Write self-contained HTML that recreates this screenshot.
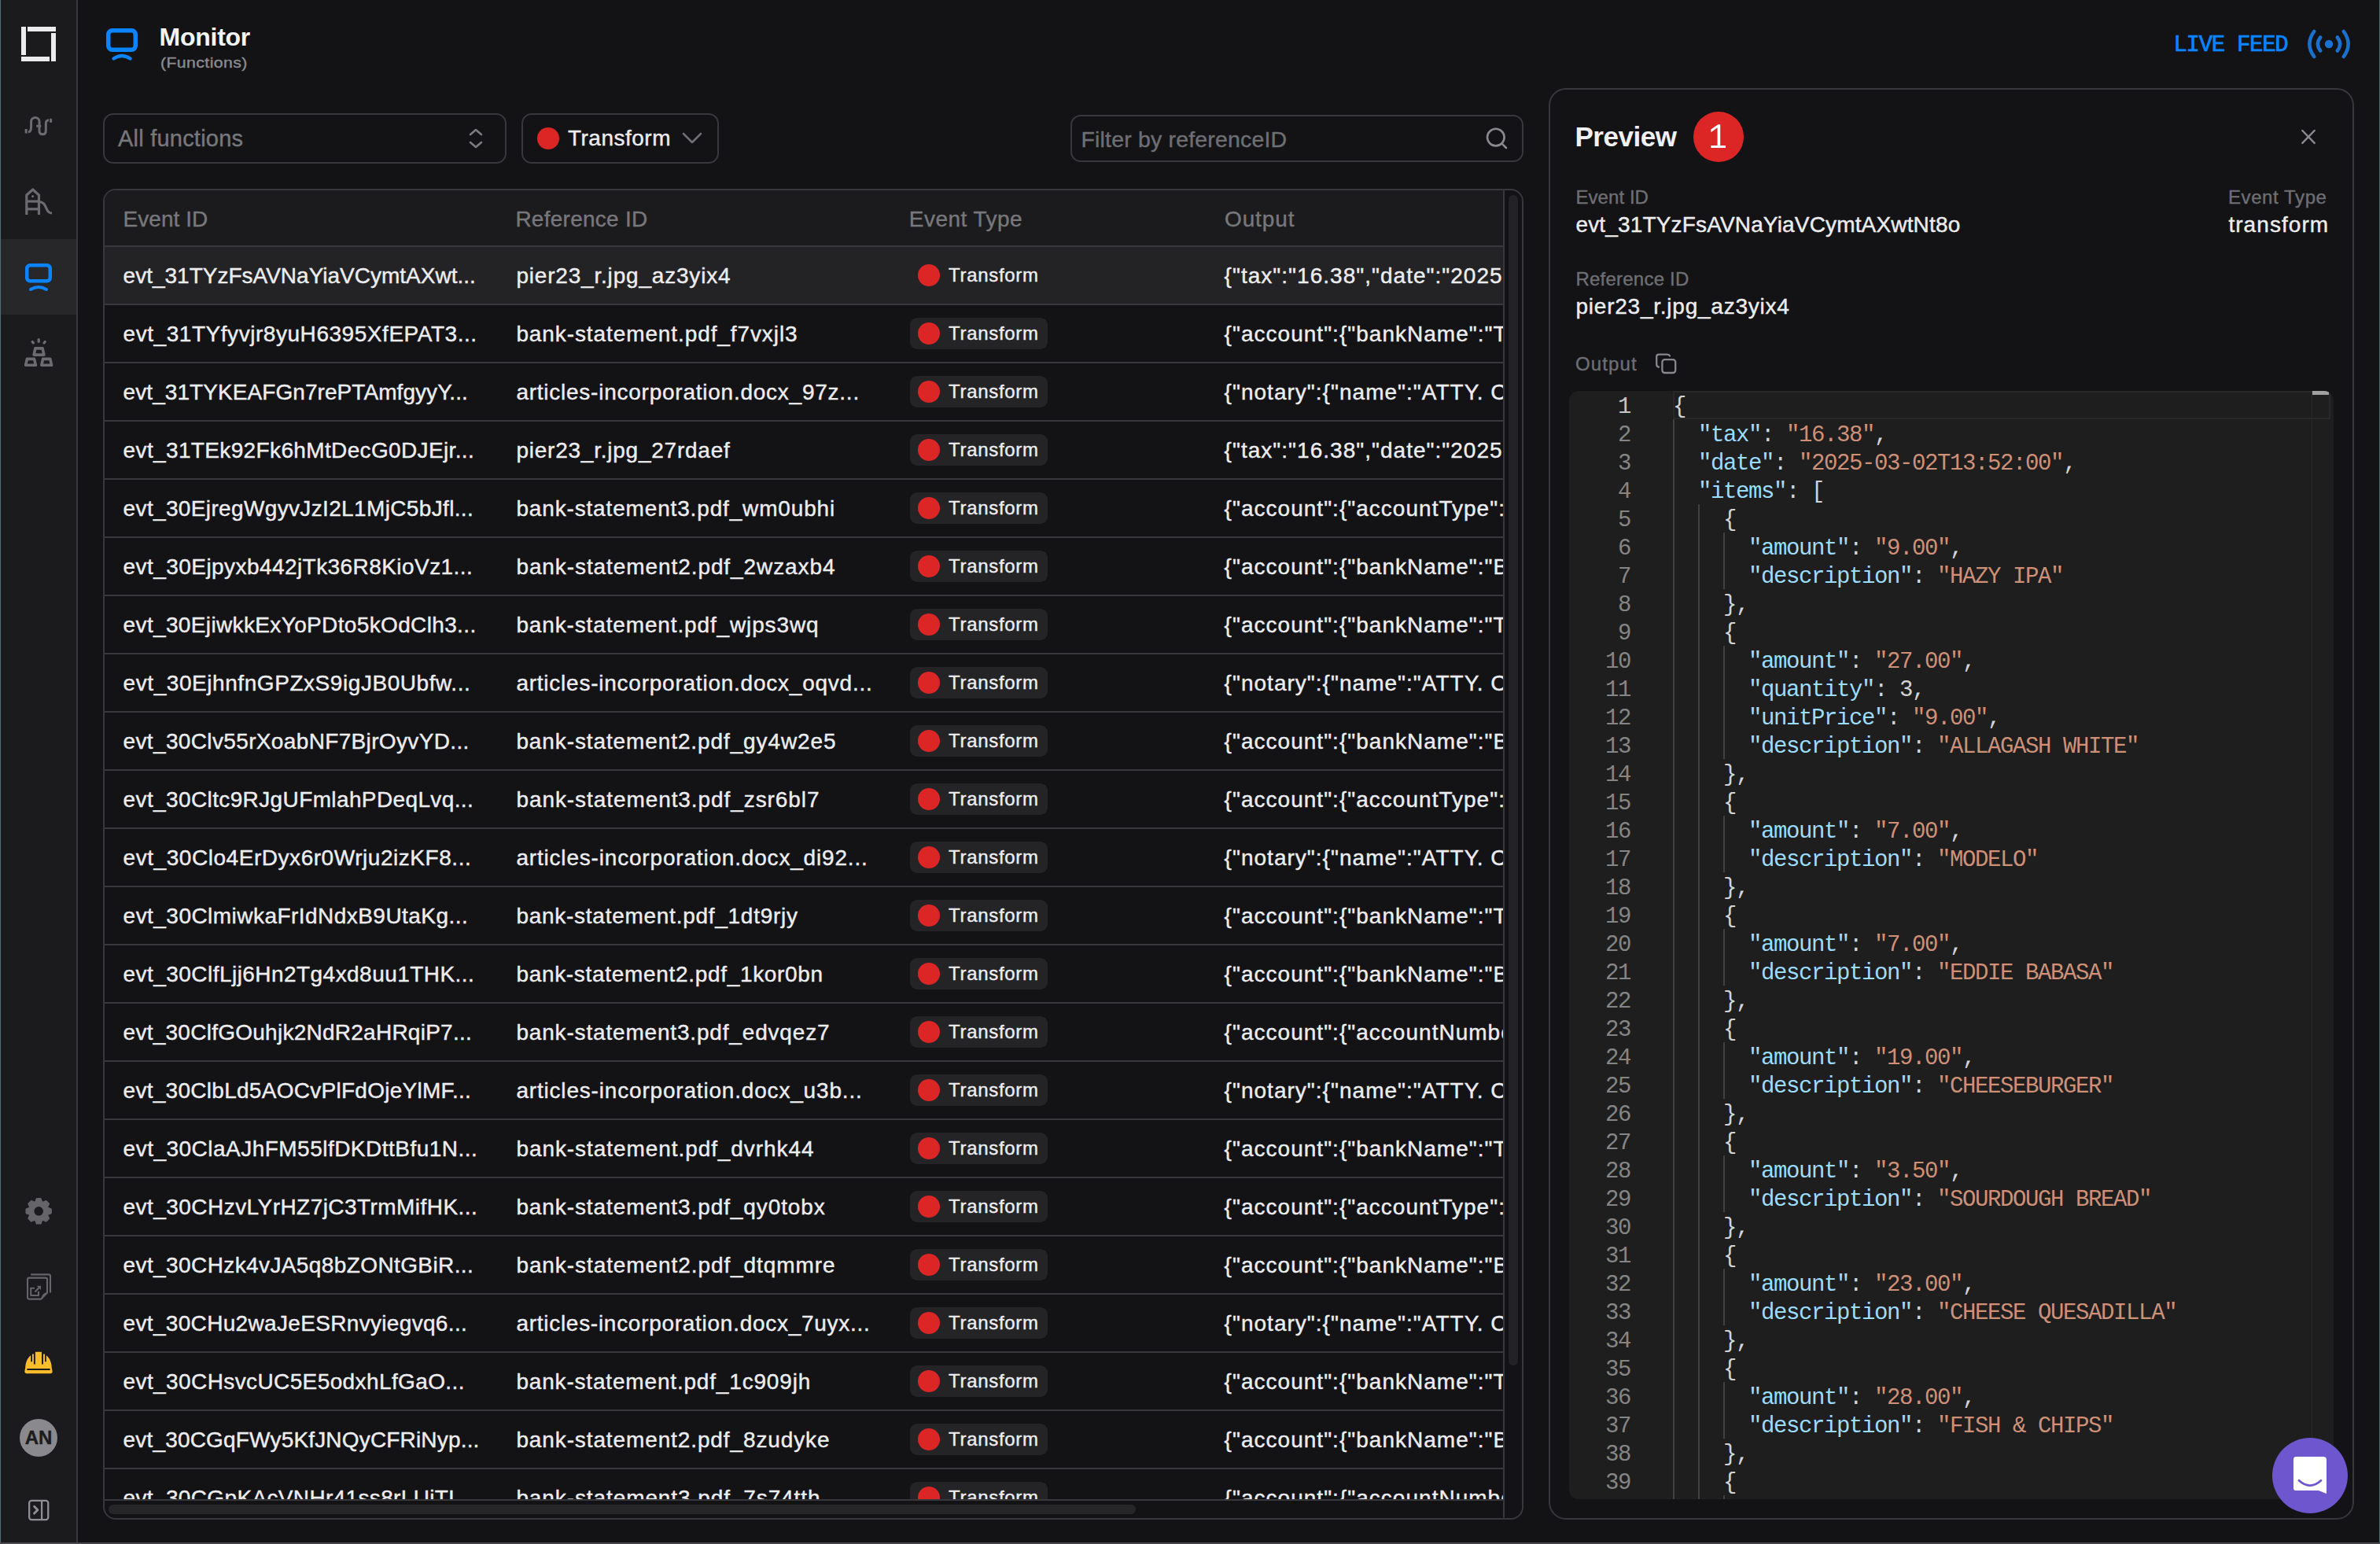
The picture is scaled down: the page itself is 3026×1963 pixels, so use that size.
<!DOCTYPE html>
<html><head><meta charset="utf-8"><title>Monitor</title>
<style>
html,body{margin:0;padding:0;width:3026px;height:1963px;overflow:hidden;background:#131316;font-family:"Liberation Sans",sans-serif;}
body{position:relative}
.t{-webkit-text-stroke:0.4px currentColor}
@media (max-width:1700px){html{zoom:0.5}}
</style></head><body>
<div style="position:absolute;left:0px;top:0px;width:1px;height:1963px;background:#4f6e78"></div><div style="position:absolute;left:3025px;top:0px;width:1px;height:1963px;background:#4f6e78"></div><div style="position:absolute;left:1px;top:0px;width:96px;height:1963px;background:#1b1b1e"></div><div style="position:absolute;left:97px;top:0px;width:2px;height:1963px;background:#38383c"></div><div style="position:absolute;left:1px;top:304px;width:96px;height:96px;background:#27272a"></div><div style="position:absolute;left:27px;top:34px;width:6px;height:36px;background:#ececef"></div><div style="position:absolute;left:35px;top:34px;width:36px;height:6px;background:#ececef"></div><div style="position:absolute;left:65px;top:42px;width:6px;height:36px;background:#ececef"></div><div style="position:absolute;left:27px;top:72px;width:36px;height:6px;background:#ececef"></div><svg style="position:absolute;left:28px;top:144px" width="42" height="32" viewBox="28 144 42 32" fill="none" stroke="#6b6b70" stroke-width="3">
<path d="M33.2 164 V169.5"/><path d="M36 167.8 C38.8 167.8 39.6 165.5 39.6 161 V154.5 C39.6 151.3 42 149.5 44.8 149.5 C47.6 149.5 50 151.5 50 154.5 V166.3 C50 169.3 51.8 170.8 54.2 170.8 C56.6 170.8 58.3 169.3 58.3 166.3 V157.5 C58.3 154.3 60 152.8 62 152.8"/><path d="M46.3 160.3 H52.3"/><path d="M64.6 150.8 V155.8"/></svg><svg style="position:absolute;left:28px;top:236px" width="42" height="40" viewBox="28 236 42 40" fill="none" stroke="#6b6b70" stroke-width="3.2" stroke-linejoin="round">
<path d="M33.8 273 V248 L41.7 241 L49.5 248 V273"/><path d="M33.8 256 H49.5"/><path d="M33.8 265.8 H49.5"/><path d="M49.5 256.5 C55 256.5 57 260 59 265 C60.5 269 62.5 271 66 271"/><circle cx="41.6" cy="249.6" r="1.6" fill="#6b6b70" stroke="none"/></svg><svg style="position:absolute;left:30px;top:333px" width="38" height="40" viewBox="0 0 38 40" fill="none" stroke="#0a84ff" stroke-width="4.5">
<rect x="4.25" y="4.25" width="29.5" height="20" rx="4"/><path d="M9 35 Q19 29 29 35" stroke-linecap="round" stroke-width="4"/></svg><svg style="position:absolute;left:26px;top:426px" width="46" height="44" viewBox="26 426 46 44" fill="none" stroke="#6b6b70" stroke-width="3.6" stroke-linejoin="round" stroke-linecap="round">
<path d="M43.1 451.1 L44.9 442.9 H54.1 L55.9 451.1 Z"/><path d="M32.6 464.3 L34.4 456.4 H43.6 L45.4 464.3 Z"/><path d="M52.8 464.3 L54.6 456.4 H63.8 L65.6 464.3 Z"/><path d="M49.2 431.6 V434.3" stroke-width="3.3"/><path d="M41.2 434.6 L42.4 436" stroke-width="3.3"/><path d="M57.2 434.6 L56 436" stroke-width="3.3"/></svg><svg style="position:absolute;left:28px;top:1518px" width="44" height="44" viewBox="28 1518 44 44"><path d="M46.65 1524.00 L51.75 1524.00 L53.34 1528.11 L54.54 1528.61 L58.57 1526.83 L62.17 1530.43 L60.39 1534.46 L60.89 1535.66 L65.00 1537.25 L65.00 1542.35 L60.89 1543.94 L60.39 1545.14 L62.17 1549.17 L58.57 1552.77 L54.54 1550.99 L53.34 1551.49 L51.75 1555.60 L46.65 1555.60 L45.06 1551.49 L43.86 1550.99 L39.83 1552.77 L36.23 1549.17 L38.01 1545.14 L37.51 1543.94 L33.40 1542.35 L33.40 1537.25 L37.51 1535.66 L38.01 1534.46 L36.23 1530.43 L39.83 1526.83 L43.86 1528.61 L45.06 1528.11 Z" fill="#646469" stroke="#646469" stroke-width="1.8" stroke-linejoin="round"/><circle cx="49.2" cy="1539.8" r="5.8" fill="#1b1b1e"/></svg><svg style="position:absolute;left:28px;top:1614px" width="42" height="44" viewBox="28 1614 42 44" fill="none" stroke="#646469" stroke-width="2.1" stroke-linejoin="round">
<path d="M39.2 1620.4 H62 Q64 1620.4 64 1622.4 V1643.6"/><path d="M37 1624.6 H58 Q60 1624.6 60 1626.6 V1643.5 L52.2 1651.6 H37 Q35 1651.6 35 1649.6 V1626.6 Q35 1624.6 37 1624.6 Z"/><path d="M53.6 1651.2 Q54 1645 60 1644.2"/><path d="M44.1 1637.7 H39.2 V1647 H49 V1641.7"/><path d="M44.4 1642.4 L50 1636.8"/><path d="M46.7 1634.8 H52 V1640.1 Z" fill="#646469" stroke="none"/></svg><svg style="position:absolute;left:28px;top:1714px" width="42" height="36" viewBox="28 1714 42 36">
<path d="M31.4 1744 C31.4 1742 32 1741 32.2 1739 C32.6 1731 35.5 1726 39.2 1723.3 V1731.2 H41 V1721.4 H42.9 V1734.6 H44.9 V1718.8 H53 V1734.6 H55 V1721.4 H57 V1731.2 H58.8 V1723.3 C62.5 1726 65.4 1731 65.8 1739 C66 1741 66.6 1742 66.6 1744 C66.6 1746 65 1746.2 63 1746.2 H35 C33 1746.2 31.4 1746 31.4 1744 Z" fill="#f9bd2b"/><path d="M35 1741 H63" stroke="#1b1b1e" stroke-width="1.8" stroke-linecap="round"/></svg><div style="position:absolute;left:25px;top:1804px;width:48px;height:48px;background:#8a8a8e;border-radius:50%"></div><div class="t" style="position:absolute;left:25px;top:1813.0px;height:30px;line-height:30px;font-size:24px;font-weight:700;color:#1c1c1e;letter-spacing:0px;font-family:'Liberation Sans',sans-serif;white-space:nowrap;width:48px;text-align:center;">AN</div><svg style="position:absolute;left:32px;top:1902px" width="34" height="36" viewBox="32 1902 34 36" fill="none" stroke="#8e8e93" stroke-width="2.3" stroke-linejoin="round">
<rect x="37.15" y="1907.85" width="24.1" height="24.2" rx="3"/><path d="M53.1 1907.85 V1932.05"/><path d="M43.6 1915.3 L47.9 1919.7 L43.6 1924.1" stroke-width="2.9" stroke-linecap="round"/></svg><svg style="position:absolute;left:132px;top:33px" width="46" height="47" viewBox="0 0 46 47" fill="none" stroke="#0a84ff">
<rect x="5.75" y="5.75" width="34.5" height="24.5" rx="5" stroke-width="5.5"/><path d="M12.5 41.5 Q23 34.5 33.5 41.5" stroke-width="4.4" stroke-linecap="round"/></svg><div class="t" style="position:absolute;left:202.6px;top:26.5px;height:40px;line-height:40px;font-size:32px;font-weight:700;color:#f5f5f7;letter-spacing:-0.274px;font-family:'Liberation Sans',sans-serif;white-space:nowrap;-webkit-text-stroke:0;">Monitor</div><div class="t" style="position:absolute;left:203.6px;top:69.0px;height:22px;line-height:22px;font-size:18px;font-weight:400;color:#8a8a8e;letter-spacing:0.35px;font-family:'Liberation Sans',sans-serif;white-space:nowrap;transform:scaleX(1.18);transform-origin:0 50%;">(Functions)</div><div class="t" style="position:absolute;left:2763.5px;top:40.1px;height:36px;line-height:36px;font-size:29px;font-weight:400;color:#0a84ff;letter-spacing:-1.3px;font-family:'Liberation Mono',monospace;white-space:nowrap;-webkit-text-stroke:0.7px #0a84ff;">LIVE FEED</div><svg style="position:absolute;left:2932px;top:35px" width="58" height="42" viewBox="0 0 58 42" fill="none" stroke="#1a72d0" stroke-width="4.5" stroke-linecap="round">
<path d="M10.2 5 Q-1.5 21 10.2 37"/><path d="M47.8 5 Q59.5 21 47.8 37"/><path d="M18.2 12.5 Q11.5 21 18.2 29.5"/><path d="M39.8 12.5 Q46.5 21 39.8 29.5"/><circle cx="29" cy="21" r="5.2" fill="#1a72d0" stroke="none"/></svg><div style="position:absolute;left:131px;top:144px;width:513px;height:64px;box-sizing:border-box;border:2px solid #38383c;border-radius:13px"></div><div class="t" style="position:absolute;left:150px;top:158.0px;height:36px;line-height:36px;font-size:29px;font-weight:400;color:#77777c;letter-spacing:0.22px;font-family:'Liberation Sans',sans-serif;white-space:nowrap;">All functions</div><svg style="position:absolute;left:594px;top:162px" width="22" height="28" viewBox="0 0 22 28" fill="none" stroke="#7a7a7f" stroke-width="2.6" stroke-linecap="round" stroke-linejoin="round">
<path d="M4 9 L11 3 L18 9"/><path d="M4 19 L11 25 L18 19"/></svg><div style="position:absolute;left:663px;top:144px;width:251px;height:64px;box-sizing:border-box;border:2px solid #38383c;border-radius:13px"></div><div style="position:absolute;left:683px;top:162px;width:28px;height:28px;background:#dc2626;border-radius:50%"></div><div class="t" style="position:absolute;left:721.9px;top:158.0px;height:35px;line-height:35px;font-size:28px;font-weight:400;color:#ededf0;letter-spacing:0.511px;font-family:'Liberation Sans',sans-serif;white-space:nowrap;">Transform</div><svg style="position:absolute;left:866px;top:167px" width="28" height="18" viewBox="0 0 28 18" fill="none" stroke="#6e6e73" stroke-width="2.6" stroke-linecap="round" stroke-linejoin="round"><path d="M3 3 L14 14 L25 3"/></svg><div style="position:absolute;left:1361px;top:146px;width:576px;height:60px;box-sizing:border-box;border:2px solid #38383c;border-radius:13px"></div><div class="t" style="position:absolute;left:1374.5px;top:158.6px;height:36px;line-height:36px;font-size:28.5px;font-weight:400;color:#6e6e73;letter-spacing:0.176px;font-family:'Liberation Sans',sans-serif;white-space:nowrap;">Filter by referenceID</div><svg style="position:absolute;left:1887px;top:160px" width="32" height="32" viewBox="0 0 32 32" fill="none" stroke="#8a8a8e" stroke-width="2.6" stroke-linecap="round"><circle cx="14.8" cy="14.6" r="10.8"/><path d="M22.6 22.6 L28 28"/></svg><div style="position:absolute;left:131px;top:240px;width:1806px;height:1692px;box-sizing:border-box;border:2px solid #38383c;border-radius:16px;overflow:hidden;"><div style="position:absolute;left:0;top:0;width:1778px;height:1664px;overflow:hidden"><div style="position:absolute;left:0px;top:0px;width:1778px;height:70px;background:#1b1b1e"></div><div style="position:absolute;left:0px;top:70px;width:1778px;height:2px;background:#38383c"></div><div class="t" style="position:absolute;left:23.599999999999994px;top:18.5px;height:35px;line-height:35px;font-size:28px;font-weight:400;color:#77777c;letter-spacing:0.035px;white-space:nowrap;">Event ID</div><div class="t" style="position:absolute;left:522.4px;top:18.5px;height:35px;line-height:35px;font-size:28px;font-weight:400;color:#77777c;letter-spacing:0.26px;white-space:nowrap;">Reference ID</div><div class="t" style="position:absolute;left:1022.8px;top:18.5px;height:35px;line-height:35px;font-size:28px;font-weight:400;color:#77777c;letter-spacing:0.466px;white-space:nowrap;">Event Type</div><div class="t" style="position:absolute;left:1424px;top:18.5px;height:35px;line-height:35px;font-size:28px;font-weight:400;color:#77777c;letter-spacing:0.885px;white-space:nowrap;">Output</div><div style="position:absolute;left:0px;top:72px;width:1778px;height:72px;background:#232326"></div><div style="position:absolute;left:0px;top:144px;width:1778px;height:2px;background:#38383c"></div><div class="t" style="position:absolute;left:23.599999999999994px;top:90.5px;height:35px;line-height:35px;font-size:28px;font-weight:400;color:#ededf0;letter-spacing:0.001px;white-space:nowrap;">evt_31TYzFsAVNaYiaVCymtAXwt...</div><div class="t" style="position:absolute;left:523.4px;top:90.5px;height:35px;line-height:35px;font-size:28px;font-weight:400;color:#ededf0;letter-spacing:0.807px;white-space:nowrap;">pier23_r.jpg_az3yix4</div><div style="position:absolute;left:1034px;top:94px;width:28px;height:28px;background:#dc2626;border-radius:50%"></div><div class="t" style="position:absolute;left:1073px;top:93.0px;height:30px;line-height:30px;font-size:24px;font-weight:400;color:#ededf0;letter-spacing:0.692px;white-space:nowrap;">Transform</div><div class="t" style="position:absolute;left:1423.6px;top:90.5px;height:35px;line-height:35px;font-size:28px;font-weight:400;color:#ededf0;letter-spacing:1.02px;white-space:nowrap;">{&quot;tax&quot;:&quot;16.38&quot;,&quot;date&quot;:&quot;2025-03-02T13:52:00&quot;}</div><div style="position:absolute;left:0px;top:218px;width:1778px;height:2px;background:#38383c"></div><div class="t" style="position:absolute;left:23.599999999999994px;top:164.5px;height:35px;line-height:35px;font-size:28px;font-weight:400;color:#ededf0;letter-spacing:0.544px;white-space:nowrap;">evt_31TYfyvjr8yuH6395XfEPAT3...</div><div class="t" style="position:absolute;left:523.4px;top:164.5px;height:35px;line-height:35px;font-size:28px;font-weight:400;color:#ededf0;letter-spacing:0.902px;white-space:nowrap;">bank-statement.pdf_f7vxjl3</div><div style="position:absolute;left:1024px;top:162px;width:175px;height:40px;background:#242427;border-radius:9px"></div><div style="position:absolute;left:1034px;top:168px;width:28px;height:28px;background:#dc2626;border-radius:50%"></div><div class="t" style="position:absolute;left:1073px;top:167.0px;height:30px;line-height:30px;font-size:24px;font-weight:400;color:#ededf0;letter-spacing:0.692px;white-space:nowrap;">Transform</div><div class="t" style="position:absolute;left:1423.6px;top:164.5px;height:35px;line-height:35px;font-size:28px;font-weight:400;color:#ededf0;letter-spacing:1.02px;white-space:nowrap;">{&quot;account&quot;:{&quot;bankName&quot;:&quot;TD Bank&quot;}}</div><div style="position:absolute;left:0px;top:292px;width:1778px;height:2px;background:#38383c"></div><div class="t" style="position:absolute;left:23.599999999999994px;top:238.5px;height:35px;line-height:35px;font-size:28px;font-weight:400;color:#ededf0;letter-spacing:0.069px;white-space:nowrap;">evt_31TYKEAFGn7rePTAmfgyyY...</div><div class="t" style="position:absolute;left:523.4px;top:238.5px;height:35px;line-height:35px;font-size:28px;font-weight:400;color:#ededf0;letter-spacing:0.755px;white-space:nowrap;">articles-incorporation.docx_97z...</div><div style="position:absolute;left:1024px;top:236px;width:175px;height:40px;background:#242427;border-radius:9px"></div><div style="position:absolute;left:1034px;top:242px;width:28px;height:28px;background:#dc2626;border-radius:50%"></div><div class="t" style="position:absolute;left:1073px;top:241.0px;height:30px;line-height:30px;font-size:24px;font-weight:400;color:#ededf0;letter-spacing:0.692px;white-space:nowrap;">Transform</div><div class="t" style="position:absolute;left:1423.6px;top:238.5px;height:35px;line-height:35px;font-size:28px;font-weight:400;color:#ededf0;letter-spacing:1.02px;white-space:nowrap;">{&quot;notary&quot;:{&quot;name&quot;:&quot;ATTY. CARLOS&quot;}}</div><div style="position:absolute;left:0px;top:366px;width:1778px;height:2px;background:#38383c"></div><div class="t" style="position:absolute;left:23.599999999999994px;top:312.5px;height:35px;line-height:35px;font-size:28px;font-weight:400;color:#ededf0;letter-spacing:0.361px;white-space:nowrap;">evt_31TEk92Fk6hMtDecG0DJEjr...</div><div class="t" style="position:absolute;left:523.4px;top:312.5px;height:35px;line-height:35px;font-size:28px;font-weight:400;color:#ededf0;letter-spacing:0.764px;white-space:nowrap;">pier23_r.jpg_27rdaef</div><div style="position:absolute;left:1024px;top:310px;width:175px;height:40px;background:#242427;border-radius:9px"></div><div style="position:absolute;left:1034px;top:316px;width:28px;height:28px;background:#dc2626;border-radius:50%"></div><div class="t" style="position:absolute;left:1073px;top:315.0px;height:30px;line-height:30px;font-size:24px;font-weight:400;color:#ededf0;letter-spacing:0.692px;white-space:nowrap;">Transform</div><div class="t" style="position:absolute;left:1423.6px;top:312.5px;height:35px;line-height:35px;font-size:28px;font-weight:400;color:#ededf0;letter-spacing:1.02px;white-space:nowrap;">{&quot;tax&quot;:&quot;16.38&quot;,&quot;date&quot;:&quot;2025-03-02T13:52:00&quot;}</div><div style="position:absolute;left:0px;top:440px;width:1778px;height:2px;background:#38383c"></div><div class="t" style="position:absolute;left:23.599999999999994px;top:386.5px;height:35px;line-height:35px;font-size:28px;font-weight:400;color:#ededf0;letter-spacing:0.355px;white-space:nowrap;">evt_30EjregWgyvJzI2L1MjC5bJfl...</div><div class="t" style="position:absolute;left:523.4px;top:386.5px;height:35px;line-height:35px;font-size:28px;font-weight:400;color:#ededf0;letter-spacing:0.843px;white-space:nowrap;">bank-statement3.pdf_wm0ubhi</div><div style="position:absolute;left:1024px;top:384px;width:175px;height:40px;background:#242427;border-radius:9px"></div><div style="position:absolute;left:1034px;top:390px;width:28px;height:28px;background:#dc2626;border-radius:50%"></div><div class="t" style="position:absolute;left:1073px;top:389.0px;height:30px;line-height:30px;font-size:24px;font-weight:400;color:#ededf0;letter-spacing:0.692px;white-space:nowrap;">Transform</div><div class="t" style="position:absolute;left:1423.6px;top:386.5px;height:35px;line-height:35px;font-size:28px;font-weight:400;color:#ededf0;letter-spacing:1.02px;white-space:nowrap;">{&quot;account&quot;:{&quot;accountType&quot;:&quot;checking&quot;}}</div><div style="position:absolute;left:0px;top:514px;width:1778px;height:2px;background:#38383c"></div><div class="t" style="position:absolute;left:23.599999999999994px;top:460.5px;height:35px;line-height:35px;font-size:28px;font-weight:400;color:#ededf0;letter-spacing:0.435px;white-space:nowrap;">evt_30Ejpyxb442jTk36R8KioVz1...</div><div class="t" style="position:absolute;left:523.4px;top:460.5px;height:35px;line-height:35px;font-size:28px;font-weight:400;color:#ededf0;letter-spacing:0.916px;white-space:nowrap;">bank-statement2.pdf_2wzaxb4</div><div style="position:absolute;left:1024px;top:458px;width:175px;height:40px;background:#242427;border-radius:9px"></div><div style="position:absolute;left:1034px;top:464px;width:28px;height:28px;background:#dc2626;border-radius:50%"></div><div class="t" style="position:absolute;left:1073px;top:463.0px;height:30px;line-height:30px;font-size:24px;font-weight:400;color:#ededf0;letter-spacing:0.692px;white-space:nowrap;">Transform</div><div class="t" style="position:absolute;left:1423.6px;top:460.5px;height:35px;line-height:35px;font-size:28px;font-weight:400;color:#ededf0;letter-spacing:1.02px;white-space:nowrap;">{&quot;account&quot;:{&quot;bankName&quot;:&quot;Bank of&quot;}}</div><div style="position:absolute;left:0px;top:588px;width:1778px;height:2px;background:#38383c"></div><div class="t" style="position:absolute;left:23.599999999999994px;top:534.5px;height:35px;line-height:35px;font-size:28px;font-weight:400;color:#ededf0;letter-spacing:0.357px;white-space:nowrap;">evt_30EjiwkkExYoPDto5kOdClh3...</div><div class="t" style="position:absolute;left:523.4px;top:534.5px;height:35px;line-height:35px;font-size:28px;font-weight:400;color:#ededf0;letter-spacing:0.861px;white-space:nowrap;">bank-statement.pdf_wjps3wq</div><div style="position:absolute;left:1024px;top:532px;width:175px;height:40px;background:#242427;border-radius:9px"></div><div style="position:absolute;left:1034px;top:538px;width:28px;height:28px;background:#dc2626;border-radius:50%"></div><div class="t" style="position:absolute;left:1073px;top:537.0px;height:30px;line-height:30px;font-size:24px;font-weight:400;color:#ededf0;letter-spacing:0.692px;white-space:nowrap;">Transform</div><div class="t" style="position:absolute;left:1423.6px;top:534.5px;height:35px;line-height:35px;font-size:28px;font-weight:400;color:#ededf0;letter-spacing:1.02px;white-space:nowrap;">{&quot;account&quot;:{&quot;bankName&quot;:&quot;TD Bank&quot;}}</div><div style="position:absolute;left:0px;top:662px;width:1778px;height:2px;background:#38383c"></div><div class="t" style="position:absolute;left:23.599999999999994px;top:608.5px;height:35px;line-height:35px;font-size:28px;font-weight:400;color:#ededf0;letter-spacing:0.562px;white-space:nowrap;">evt_30EjhnfnGPZxS9igJB0Ubfw...</div><div class="t" style="position:absolute;left:523.4px;top:608.5px;height:35px;line-height:35px;font-size:28px;font-weight:400;color:#ededf0;letter-spacing:0.763px;white-space:nowrap;">articles-incorporation.docx_oqvd...</div><div style="position:absolute;left:1024px;top:606px;width:175px;height:40px;background:#242427;border-radius:9px"></div><div style="position:absolute;left:1034px;top:612px;width:28px;height:28px;background:#dc2626;border-radius:50%"></div><div class="t" style="position:absolute;left:1073px;top:611.0px;height:30px;line-height:30px;font-size:24px;font-weight:400;color:#ededf0;letter-spacing:0.692px;white-space:nowrap;">Transform</div><div class="t" style="position:absolute;left:1423.6px;top:608.5px;height:35px;line-height:35px;font-size:28px;font-weight:400;color:#ededf0;letter-spacing:1.02px;white-space:nowrap;">{&quot;notary&quot;:{&quot;name&quot;:&quot;ATTY. CARLOS&quot;}}</div><div style="position:absolute;left:0px;top:736px;width:1778px;height:2px;background:#38383c"></div><div class="t" style="position:absolute;left:23.599999999999994px;top:682.5px;height:35px;line-height:35px;font-size:28px;font-weight:400;color:#ededf0;letter-spacing:0.354px;white-space:nowrap;">evt_30Clv55rXoabNF7BjrOyvYD...</div><div class="t" style="position:absolute;left:523.4px;top:682.5px;height:35px;line-height:35px;font-size:28px;font-weight:400;color:#ededf0;letter-spacing:0.894px;white-space:nowrap;">bank-statement2.pdf_gy4w2e5</div><div style="position:absolute;left:1024px;top:680px;width:175px;height:40px;background:#242427;border-radius:9px"></div><div style="position:absolute;left:1034px;top:686px;width:28px;height:28px;background:#dc2626;border-radius:50%"></div><div class="t" style="position:absolute;left:1073px;top:685.0px;height:30px;line-height:30px;font-size:24px;font-weight:400;color:#ededf0;letter-spacing:0.692px;white-space:nowrap;">Transform</div><div class="t" style="position:absolute;left:1423.6px;top:682.5px;height:35px;line-height:35px;font-size:28px;font-weight:400;color:#ededf0;letter-spacing:1.02px;white-space:nowrap;">{&quot;account&quot;:{&quot;bankName&quot;:&quot;Bank of&quot;}}</div><div style="position:absolute;left:0px;top:810px;width:1778px;height:2px;background:#38383c"></div><div class="t" style="position:absolute;left:23.599999999999994px;top:756.5px;height:35px;line-height:35px;font-size:28px;font-weight:400;color:#ededf0;letter-spacing:0.379px;white-space:nowrap;">evt_30Cltc9RJgUFmlahPDeqLvq...</div><div class="t" style="position:absolute;left:523.4px;top:756.5px;height:35px;line-height:35px;font-size:28px;font-weight:400;color:#ededf0;letter-spacing:0.926px;white-space:nowrap;">bank-statement3.pdf_zsr6bl7</div><div style="position:absolute;left:1024px;top:754px;width:175px;height:40px;background:#242427;border-radius:9px"></div><div style="position:absolute;left:1034px;top:760px;width:28px;height:28px;background:#dc2626;border-radius:50%"></div><div class="t" style="position:absolute;left:1073px;top:759.0px;height:30px;line-height:30px;font-size:24px;font-weight:400;color:#ededf0;letter-spacing:0.692px;white-space:nowrap;">Transform</div><div class="t" style="position:absolute;left:1423.6px;top:756.5px;height:35px;line-height:35px;font-size:28px;font-weight:400;color:#ededf0;letter-spacing:1.02px;white-space:nowrap;">{&quot;account&quot;:{&quot;accountType&quot;:&quot;checking&quot;}}</div><div style="position:absolute;left:0px;top:884px;width:1778px;height:2px;background:#38383c"></div><div class="t" style="position:absolute;left:23.599999999999994px;top:830.5px;height:35px;line-height:35px;font-size:28px;font-weight:400;color:#ededf0;letter-spacing:0.544px;white-space:nowrap;">evt_30Clo4ErDyx6r0Wrju2izKF8...</div><div class="t" style="position:absolute;left:523.4px;top:830.5px;height:35px;line-height:35px;font-size:28px;font-weight:400;color:#ededf0;letter-spacing:0.815px;white-space:nowrap;">articles-incorporation.docx_di92...</div><div style="position:absolute;left:1024px;top:828px;width:175px;height:40px;background:#242427;border-radius:9px"></div><div style="position:absolute;left:1034px;top:834px;width:28px;height:28px;background:#dc2626;border-radius:50%"></div><div class="t" style="position:absolute;left:1073px;top:833.0px;height:30px;line-height:30px;font-size:24px;font-weight:400;color:#ededf0;letter-spacing:0.692px;white-space:nowrap;">Transform</div><div class="t" style="position:absolute;left:1423.6px;top:830.5px;height:35px;line-height:35px;font-size:28px;font-weight:400;color:#ededf0;letter-spacing:1.02px;white-space:nowrap;">{&quot;notary&quot;:{&quot;name&quot;:&quot;ATTY. CARLOS&quot;}}</div><div style="position:absolute;left:0px;top:958px;width:1778px;height:2px;background:#38383c"></div><div class="t" style="position:absolute;left:23.599999999999994px;top:904.5px;height:35px;line-height:35px;font-size:28px;font-weight:400;color:#ededf0;letter-spacing:0.46px;white-space:nowrap;">evt_30ClmiwkaFrIdNdxB9UtaKg...</div><div class="t" style="position:absolute;left:523.4px;top:904.5px;height:35px;line-height:35px;font-size:28px;font-weight:400;color:#ededf0;letter-spacing:0.732px;white-space:nowrap;">bank-statement.pdf_1dt9rjy</div><div style="position:absolute;left:1024px;top:902px;width:175px;height:40px;background:#242427;border-radius:9px"></div><div style="position:absolute;left:1034px;top:908px;width:28px;height:28px;background:#dc2626;border-radius:50%"></div><div class="t" style="position:absolute;left:1073px;top:907.0px;height:30px;line-height:30px;font-size:24px;font-weight:400;color:#ededf0;letter-spacing:0.692px;white-space:nowrap;">Transform</div><div class="t" style="position:absolute;left:1423.6px;top:904.5px;height:35px;line-height:35px;font-size:28px;font-weight:400;color:#ededf0;letter-spacing:1.02px;white-space:nowrap;">{&quot;account&quot;:{&quot;bankName&quot;:&quot;TD Bank&quot;}}</div><div style="position:absolute;left:0px;top:1032px;width:1778px;height:2px;background:#38383c"></div><div class="t" style="position:absolute;left:23.599999999999994px;top:978.5px;height:35px;line-height:35px;font-size:28px;font-weight:400;color:#ededf0;letter-spacing:0.45px;white-space:nowrap;">evt_30ClfLjj6Hn2Tg4xd8uu1THK...</div><div class="t" style="position:absolute;left:523.4px;top:978.5px;height:35px;line-height:35px;font-size:28px;font-weight:400;color:#ededf0;letter-spacing:0.683px;white-space:nowrap;">bank-statement2.pdf_1kor0bn</div><div style="position:absolute;left:1024px;top:976px;width:175px;height:40px;background:#242427;border-radius:9px"></div><div style="position:absolute;left:1034px;top:982px;width:28px;height:28px;background:#dc2626;border-radius:50%"></div><div class="t" style="position:absolute;left:1073px;top:981.0px;height:30px;line-height:30px;font-size:24px;font-weight:400;color:#ededf0;letter-spacing:0.692px;white-space:nowrap;">Transform</div><div class="t" style="position:absolute;left:1423.6px;top:978.5px;height:35px;line-height:35px;font-size:28px;font-weight:400;color:#ededf0;letter-spacing:1.02px;white-space:nowrap;">{&quot;account&quot;:{&quot;bankName&quot;:&quot;Bank of&quot;}}</div><div style="position:absolute;left:0px;top:1106px;width:1778px;height:2px;background:#38383c"></div><div class="t" style="position:absolute;left:23.599999999999994px;top:1052.5px;height:35px;line-height:35px;font-size:28px;font-weight:400;color:#ededf0;letter-spacing:0.256px;white-space:nowrap;">evt_30ClfGOuhjk2NdR2aHRqiP7...</div><div class="t" style="position:absolute;left:523.4px;top:1052.5px;height:35px;line-height:35px;font-size:28px;font-weight:400;color:#ededf0;letter-spacing:0.826px;white-space:nowrap;">bank-statement3.pdf_edvqez7</div><div style="position:absolute;left:1024px;top:1050px;width:175px;height:40px;background:#242427;border-radius:9px"></div><div style="position:absolute;left:1034px;top:1056px;width:28px;height:28px;background:#dc2626;border-radius:50%"></div><div class="t" style="position:absolute;left:1073px;top:1055.0px;height:30px;line-height:30px;font-size:24px;font-weight:400;color:#ededf0;letter-spacing:0.692px;white-space:nowrap;">Transform</div><div class="t" style="position:absolute;left:1423.6px;top:1052.5px;height:35px;line-height:35px;font-size:28px;font-weight:400;color:#ededf0;letter-spacing:1.02px;white-space:nowrap;">{&quot;account&quot;:{&quot;accountNumber&quot;:&quot;1234&quot;}}</div><div style="position:absolute;left:0px;top:1180px;width:1778px;height:2px;background:#38383c"></div><div class="t" style="position:absolute;left:23.599999999999994px;top:1126.5px;height:35px;line-height:35px;font-size:28px;font-weight:400;color:#ededf0;letter-spacing:0.276px;white-space:nowrap;">evt_30ClbLd5AOCvPlFdOjeYlMF...</div><div class="t" style="position:absolute;left:523.4px;top:1126.5px;height:35px;line-height:35px;font-size:28px;font-weight:400;color:#ededf0;letter-spacing:0.816px;white-space:nowrap;">articles-incorporation.docx_u3b...</div><div style="position:absolute;left:1024px;top:1124px;width:175px;height:40px;background:#242427;border-radius:9px"></div><div style="position:absolute;left:1034px;top:1130px;width:28px;height:28px;background:#dc2626;border-radius:50%"></div><div class="t" style="position:absolute;left:1073px;top:1129.0px;height:30px;line-height:30px;font-size:24px;font-weight:400;color:#ededf0;letter-spacing:0.692px;white-space:nowrap;">Transform</div><div class="t" style="position:absolute;left:1423.6px;top:1126.5px;height:35px;line-height:35px;font-size:28px;font-weight:400;color:#ededf0;letter-spacing:1.02px;white-space:nowrap;">{&quot;notary&quot;:{&quot;name&quot;:&quot;ATTY. CARLOS&quot;}}</div><div style="position:absolute;left:0px;top:1254px;width:1778px;height:2px;background:#38383c"></div><div class="t" style="position:absolute;left:23.599999999999994px;top:1200.5px;height:35px;line-height:35px;font-size:28px;font-weight:400;color:#ededf0;letter-spacing:0.481px;white-space:nowrap;">evt_30ClaAJhFM55lfDKDttBfu1N...</div><div class="t" style="position:absolute;left:523.4px;top:1200.5px;height:35px;line-height:35px;font-size:28px;font-weight:400;color:#ededf0;letter-spacing:0.932px;white-space:nowrap;">bank-statement.pdf_dvrhk44</div><div style="position:absolute;left:1024px;top:1198px;width:175px;height:40px;background:#242427;border-radius:9px"></div><div style="position:absolute;left:1034px;top:1204px;width:28px;height:28px;background:#dc2626;border-radius:50%"></div><div class="t" style="position:absolute;left:1073px;top:1203.0px;height:30px;line-height:30px;font-size:24px;font-weight:400;color:#ededf0;letter-spacing:0.692px;white-space:nowrap;">Transform</div><div class="t" style="position:absolute;left:1423.6px;top:1200.5px;height:35px;line-height:35px;font-size:28px;font-weight:400;color:#ededf0;letter-spacing:1.02px;white-space:nowrap;">{&quot;account&quot;:{&quot;bankName&quot;:&quot;TD Bank&quot;}}</div><div style="position:absolute;left:0px;top:1328px;width:1778px;height:2px;background:#38383c"></div><div class="t" style="position:absolute;left:23.599999999999994px;top:1274.5px;height:35px;line-height:35px;font-size:28px;font-weight:400;color:#ededf0;letter-spacing:0.448px;white-space:nowrap;">evt_30CHzvLYrHZ7jC3TrmMifHK...</div><div class="t" style="position:absolute;left:523.4px;top:1274.5px;height:35px;line-height:35px;font-size:28px;font-weight:400;color:#ededf0;letter-spacing:0.904px;white-space:nowrap;">bank-statement3.pdf_qy0tobx</div><div style="position:absolute;left:1024px;top:1272px;width:175px;height:40px;background:#242427;border-radius:9px"></div><div style="position:absolute;left:1034px;top:1278px;width:28px;height:28px;background:#dc2626;border-radius:50%"></div><div class="t" style="position:absolute;left:1073px;top:1277.0px;height:30px;line-height:30px;font-size:24px;font-weight:400;color:#ededf0;letter-spacing:0.692px;white-space:nowrap;">Transform</div><div class="t" style="position:absolute;left:1423.6px;top:1274.5px;height:35px;line-height:35px;font-size:28px;font-weight:400;color:#ededf0;letter-spacing:1.02px;white-space:nowrap;">{&quot;account&quot;:{&quot;accountType&quot;:&quot;checking&quot;}}</div><div style="position:absolute;left:0px;top:1402px;width:1778px;height:2px;background:#38383c"></div><div class="t" style="position:absolute;left:23.599999999999994px;top:1348.5px;height:35px;line-height:35px;font-size:28px;font-weight:400;color:#ededf0;letter-spacing:0.393px;white-space:nowrap;">evt_30CHzk4vJA5q8bZONtGBiR...</div><div class="t" style="position:absolute;left:523.4px;top:1348.5px;height:35px;line-height:35px;font-size:28px;font-weight:400;color:#ededf0;letter-spacing:0.918px;white-space:nowrap;">bank-statement2.pdf_dtqmmre</div><div style="position:absolute;left:1024px;top:1346px;width:175px;height:40px;background:#242427;border-radius:9px"></div><div style="position:absolute;left:1034px;top:1352px;width:28px;height:28px;background:#dc2626;border-radius:50%"></div><div class="t" style="position:absolute;left:1073px;top:1351.0px;height:30px;line-height:30px;font-size:24px;font-weight:400;color:#ededf0;letter-spacing:0.692px;white-space:nowrap;">Transform</div><div class="t" style="position:absolute;left:1423.6px;top:1348.5px;height:35px;line-height:35px;font-size:28px;font-weight:400;color:#ededf0;letter-spacing:1.02px;white-space:nowrap;">{&quot;account&quot;:{&quot;bankName&quot;:&quot;Bank of&quot;}}</div><div style="position:absolute;left:0px;top:1476px;width:1778px;height:2px;background:#38383c"></div><div class="t" style="position:absolute;left:23.599999999999994px;top:1422.5px;height:35px;line-height:35px;font-size:28px;font-weight:400;color:#ededf0;letter-spacing:0.327px;white-space:nowrap;">evt_30CHu2waJeESRnvyiegvq6...</div><div class="t" style="position:absolute;left:523.4px;top:1422.5px;height:35px;line-height:35px;font-size:28px;font-weight:400;color:#ededf0;letter-spacing:0.721px;white-space:nowrap;">articles-incorporation.docx_7uyx...</div><div style="position:absolute;left:1024px;top:1420px;width:175px;height:40px;background:#242427;border-radius:9px"></div><div style="position:absolute;left:1034px;top:1426px;width:28px;height:28px;background:#dc2626;border-radius:50%"></div><div class="t" style="position:absolute;left:1073px;top:1425.0px;height:30px;line-height:30px;font-size:24px;font-weight:400;color:#ededf0;letter-spacing:0.692px;white-space:nowrap;">Transform</div><div class="t" style="position:absolute;left:1423.6px;top:1422.5px;height:35px;line-height:35px;font-size:28px;font-weight:400;color:#ededf0;letter-spacing:1.02px;white-space:nowrap;">{&quot;notary&quot;:{&quot;name&quot;:&quot;ATTY. CARLOS&quot;}}</div><div style="position:absolute;left:0px;top:1550px;width:1778px;height:2px;background:#38383c"></div><div class="t" style="position:absolute;left:23.599999999999994px;top:1496.5px;height:35px;line-height:35px;font-size:28px;font-weight:400;color:#ededf0;letter-spacing:0.392px;white-space:nowrap;">evt_30CHsvcUC5E5odxhLfGaO...</div><div class="t" style="position:absolute;left:523.4px;top:1496.5px;height:35px;line-height:35px;font-size:28px;font-weight:400;color:#ededf0;letter-spacing:0.821px;white-space:nowrap;">bank-statement.pdf_1c909jh</div><div style="position:absolute;left:1024px;top:1494px;width:175px;height:40px;background:#242427;border-radius:9px"></div><div style="position:absolute;left:1034px;top:1500px;width:28px;height:28px;background:#dc2626;border-radius:50%"></div><div class="t" style="position:absolute;left:1073px;top:1499.0px;height:30px;line-height:30px;font-size:24px;font-weight:400;color:#ededf0;letter-spacing:0.692px;white-space:nowrap;">Transform</div><div class="t" style="position:absolute;left:1423.6px;top:1496.5px;height:35px;line-height:35px;font-size:28px;font-weight:400;color:#ededf0;letter-spacing:1.02px;white-space:nowrap;">{&quot;account&quot;:{&quot;bankName&quot;:&quot;TD Bank&quot;}}</div><div style="position:absolute;left:0px;top:1624px;width:1778px;height:2px;background:#38383c"></div><div class="t" style="position:absolute;left:23.599999999999994px;top:1570.5px;height:35px;line-height:35px;font-size:28px;font-weight:400;color:#ededf0;letter-spacing:0.176px;white-space:nowrap;">evt_30CGqFWy5KfJNQyCFRiNyp...</div><div class="t" style="position:absolute;left:523.4px;top:1570.5px;height:35px;line-height:35px;font-size:28px;font-weight:400;color:#ededf0;letter-spacing:0.886px;white-space:nowrap;">bank-statement2.pdf_8zudyke</div><div style="position:absolute;left:1024px;top:1568px;width:175px;height:40px;background:#242427;border-radius:9px"></div><div style="position:absolute;left:1034px;top:1574px;width:28px;height:28px;background:#dc2626;border-radius:50%"></div><div class="t" style="position:absolute;left:1073px;top:1573.0px;height:30px;line-height:30px;font-size:24px;font-weight:400;color:#ededf0;letter-spacing:0.692px;white-space:nowrap;">Transform</div><div class="t" style="position:absolute;left:1423.6px;top:1570.5px;height:35px;line-height:35px;font-size:28px;font-weight:400;color:#ededf0;letter-spacing:1.02px;white-space:nowrap;">{&quot;account&quot;:{&quot;bankName&quot;:&quot;Bank of&quot;}}</div><div style="position:absolute;left:0px;top:1698px;width:1778px;height:2px;background:#38383c"></div><div class="t" style="position:absolute;left:23.599999999999994px;top:1644.5px;height:35px;line-height:35px;font-size:28px;font-weight:400;color:#ededf0;letter-spacing:0.35px;white-space:nowrap;">evt_30CGpKAcVNHr41ss8rLUiTL...</div><div class="t" style="position:absolute;left:523.4px;top:1644.5px;height:35px;line-height:35px;font-size:28px;font-weight:400;color:#ededf0;letter-spacing:0.903px;white-space:nowrap;">bank-statement3.pdf_7s74tth</div><div style="position:absolute;left:1024px;top:1642px;width:175px;height:40px;background:#242427;border-radius:9px"></div><div style="position:absolute;left:1034px;top:1648px;width:28px;height:28px;background:#dc2626;border-radius:50%"></div><div class="t" style="position:absolute;left:1073px;top:1647.0px;height:30px;line-height:30px;font-size:24px;font-weight:400;color:#ededf0;letter-spacing:0.692px;white-space:nowrap;">Transform</div><div class="t" style="position:absolute;left:1423.6px;top:1644.5px;height:35px;line-height:35px;font-size:28px;font-weight:400;color:#ededf0;letter-spacing:1.02px;white-space:nowrap;">{&quot;account&quot;:{&quot;accountNumber&quot;:&quot;1234&quot;}}</div></div><div style="position:absolute;left:1778px;top:0px;width:2px;height:1688px;background:#38383c"></div><div style="position:absolute;left:1785px;top:6px;width:12px;height:1488px;background:#232326;border-radius:6px"></div><div style="position:absolute;left:0px;top:1664px;width:1778px;height:2px;background:#38383c"></div><div style="position:absolute;left:5px;top:1671px;width:1306px;height:12px;background:#262629;border-radius:6px"></div></div><div style="position:absolute;left:1969px;top:112px;width:1024px;height:1820px;box-sizing:border-box;border:2px solid #38383c;border-radius:22px"></div><div class="t" style="position:absolute;left:2002.4px;top:152.0px;height:44px;line-height:44px;font-size:35px;font-weight:700;color:#f0f0f2;letter-spacing:-0.464px;font-family:'Liberation Sans',sans-serif;white-space:nowrap;-webkit-text-stroke:0;">Preview</div><div style="position:absolute;left:2153px;top:142px;width:63.5px;height:63.5px;background:#dc2626;border-radius:50%"></div><svg style="position:absolute;left:2170px;top:154px" width="30" height="38" viewBox="2170 154 30 38"><path d="M2175.3 164.6 L2184.4 158.3 H2187.2 V184.9 H2194 V188.1 H2175.3 V184.9 H2183.6 V162.3 L2175.3 168.3 Z" fill="#fff"/></svg><svg style="position:absolute;left:2921px;top:160px" width="28" height="28" viewBox="0 0 28 28" fill="none" stroke="#8a8a8e" stroke-width="2.5" stroke-linecap="round"><path d="M6.3 6 L21.7 21.8"/><path d="M21.7 6 L6.3 21.8"/></svg><div class="t" style="position:absolute;left:2003.5px;top:235.8px;height:30px;line-height:30px;font-size:24px;font-weight:400;color:#6e6e73;letter-spacing:0.056px;font-family:'Liberation Sans',sans-serif;white-space:nowrap;">Event ID</div><div class="t" style="position:absolute;left:2833px;top:235.8px;height:30px;line-height:30px;font-size:24px;font-weight:400;color:#6e6e73;letter-spacing:0.586px;font-family:'Liberation Sans',sans-serif;white-space:nowrap;">Event Type</div><div class="t" style="position:absolute;left:2003.4px;top:268.3px;height:35px;line-height:35px;font-size:28px;font-weight:400;color:#ededf0;letter-spacing:0.164px;font-family:'Liberation Sans',sans-serif;white-space:nowrap;">evt_31TYzFsAVNaYiaVCymtAXwtNt8o</div><div class="t" style="position:absolute;left:2833.4px;top:268.3px;height:35px;line-height:35px;font-size:28px;font-weight:400;color:#ededf0;letter-spacing:1.06px;font-family:'Liberation Sans',sans-serif;white-space:nowrap;">transform</div><div class="t" style="position:absolute;left:2003.5px;top:339.6px;height:30px;line-height:30px;font-size:24px;font-weight:400;color:#6e6e73;letter-spacing:0.221px;font-family:'Liberation Sans',sans-serif;white-space:nowrap;">Reference ID</div><div class="t" style="position:absolute;left:2003.5px;top:372.3px;height:35px;line-height:35px;font-size:28px;font-weight:400;color:#ededf0;letter-spacing:0.765px;font-family:'Liberation Sans',sans-serif;white-space:nowrap;">pier23_r.jpg_az3yix4</div><div class="t" style="position:absolute;left:2003px;top:447.5px;height:30px;line-height:30px;font-size:24px;font-weight:400;color:#6e6e73;letter-spacing:1.124px;font-family:'Liberation Sans',sans-serif;white-space:nowrap;">Output</div><svg style="position:absolute;left:2103px;top:447px" width="30" height="30" viewBox="0 0 30 30" fill="none" stroke="#88888c" stroke-width="2.3" stroke-linejoin="round" stroke-linecap="round"><path d="M6 19.6 Q3.2 19 3.2 16 V6.6 Q3.2 3.6 6.2 3.6 H16.4 Q19 3.6 20 5.4"/><rect x="10.4" y="10.2" width="16.8" height="16.8" rx="3.2"/></svg><div style="position:absolute;left:1995px;top:497px;width:972px;height:1409px;background:#1e1e1e;border-radius:12px;overflow:hidden;font-family:'Liberation Mono',monospace;"><div style="position:absolute;left:132px;top:0px;width:836px;height:36px;box-sizing:border-box;border:2px solid #282828;"></div><div style="position:absolute;left:944px;top:0;width:1px;height:1409px;background:#2a2a2a"></div><div style="position:absolute;left:945px;top:0;width:21px;height:5px;background:#a0a0a0"></div><div style="position:absolute;left:0;width:78px;text-align:right;top:3.3px;height:36px;line-height:36px;font-size:29px;letter-spacing:-1.4px;color:#c6c6c6;white-space:pre">1</div><div style="position:absolute;left:132px;top:3.3px;height:36px;line-height:36px;font-size:29px;letter-spacing:-1.4px;white-space:pre"><span style="color:#d4d4d4">{</span></div><div style="position:absolute;left:0;width:78px;text-align:right;top:39.3px;height:36px;line-height:36px;font-size:29px;letter-spacing:-1.4px;color:#858585;white-space:pre">2</div><div style="position:absolute;left:132px;top:36px;width:2px;height:36px;background:#404040"></div><div style="position:absolute;left:164px;top:39.3px;height:36px;line-height:36px;font-size:29px;letter-spacing:-1.4px;white-space:pre"><span style="color:#9cdcfe">&quot;tax&quot;</span><span style="color:#d4d4d4">:</span><span style="color:#d4d4d4"> </span><span style="color:#ce9178">&quot;16.38&quot;</span><span style="color:#d4d4d4">,</span></div><div style="position:absolute;left:0;width:78px;text-align:right;top:75.3px;height:36px;line-height:36px;font-size:29px;letter-spacing:-1.4px;color:#858585;white-space:pre">3</div><div style="position:absolute;left:132px;top:72px;width:2px;height:36px;background:#404040"></div><div style="position:absolute;left:164px;top:75.3px;height:36px;line-height:36px;font-size:29px;letter-spacing:-1.4px;white-space:pre"><span style="color:#9cdcfe">&quot;date&quot;</span><span style="color:#d4d4d4">:</span><span style="color:#d4d4d4"> </span><span style="color:#ce9178">&quot;2025-03-02T13:52:00&quot;</span><span style="color:#d4d4d4">,</span></div><div style="position:absolute;left:0;width:78px;text-align:right;top:111.3px;height:36px;line-height:36px;font-size:29px;letter-spacing:-1.4px;color:#858585;white-space:pre">4</div><div style="position:absolute;left:132px;top:108px;width:2px;height:36px;background:#404040"></div><div style="position:absolute;left:164px;top:111.3px;height:36px;line-height:36px;font-size:29px;letter-spacing:-1.4px;white-space:pre"><span style="color:#9cdcfe">&quot;items&quot;</span><span style="color:#d4d4d4">:</span><span style="color:#d4d4d4"> </span><span style="color:#d4d4d4">[</span></div><div style="position:absolute;left:0;width:78px;text-align:right;top:147.3px;height:36px;line-height:36px;font-size:29px;letter-spacing:-1.4px;color:#858585;white-space:pre">5</div><div style="position:absolute;left:132px;top:144px;width:2px;height:36px;background:#404040"></div><div style="position:absolute;left:164px;top:144px;width:2px;height:36px;background:#404040"></div><div style="position:absolute;left:196px;top:147.3px;height:36px;line-height:36px;font-size:29px;letter-spacing:-1.4px;white-space:pre"><span style="color:#d4d4d4">{</span></div><div style="position:absolute;left:0;width:78px;text-align:right;top:183.3px;height:36px;line-height:36px;font-size:29px;letter-spacing:-1.4px;color:#858585;white-space:pre">6</div><div style="position:absolute;left:132px;top:180px;width:2px;height:36px;background:#404040"></div><div style="position:absolute;left:164px;top:180px;width:2px;height:36px;background:#404040"></div><div style="position:absolute;left:196px;top:180px;width:2px;height:36px;background:#404040"></div><div style="position:absolute;left:228px;top:183.3px;height:36px;line-height:36px;font-size:29px;letter-spacing:-1.4px;white-space:pre"><span style="color:#9cdcfe">&quot;amount&quot;</span><span style="color:#d4d4d4">:</span><span style="color:#d4d4d4"> </span><span style="color:#ce9178">&quot;9.00&quot;</span><span style="color:#d4d4d4">,</span></div><div style="position:absolute;left:0;width:78px;text-align:right;top:219.3px;height:36px;line-height:36px;font-size:29px;letter-spacing:-1.4px;color:#858585;white-space:pre">7</div><div style="position:absolute;left:132px;top:216px;width:2px;height:36px;background:#404040"></div><div style="position:absolute;left:164px;top:216px;width:2px;height:36px;background:#404040"></div><div style="position:absolute;left:196px;top:216px;width:2px;height:36px;background:#404040"></div><div style="position:absolute;left:228px;top:219.3px;height:36px;line-height:36px;font-size:29px;letter-spacing:-1.4px;white-space:pre"><span style="color:#9cdcfe">&quot;description&quot;</span><span style="color:#d4d4d4">:</span><span style="color:#d4d4d4"> </span><span style="color:#ce9178">&quot;HAZY IPA&quot;</span></div><div style="position:absolute;left:0;width:78px;text-align:right;top:255.3px;height:36px;line-height:36px;font-size:29px;letter-spacing:-1.4px;color:#858585;white-space:pre">8</div><div style="position:absolute;left:132px;top:252px;width:2px;height:36px;background:#404040"></div><div style="position:absolute;left:164px;top:252px;width:2px;height:36px;background:#404040"></div><div style="position:absolute;left:196px;top:255.3px;height:36px;line-height:36px;font-size:29px;letter-spacing:-1.4px;white-space:pre"><span style="color:#d4d4d4">}</span><span style="color:#d4d4d4">,</span></div><div style="position:absolute;left:0;width:78px;text-align:right;top:291.3px;height:36px;line-height:36px;font-size:29px;letter-spacing:-1.4px;color:#858585;white-space:pre">9</div><div style="position:absolute;left:132px;top:288px;width:2px;height:36px;background:#404040"></div><div style="position:absolute;left:164px;top:288px;width:2px;height:36px;background:#404040"></div><div style="position:absolute;left:196px;top:291.3px;height:36px;line-height:36px;font-size:29px;letter-spacing:-1.4px;white-space:pre"><span style="color:#d4d4d4">{</span></div><div style="position:absolute;left:0;width:78px;text-align:right;top:327.3px;height:36px;line-height:36px;font-size:29px;letter-spacing:-1.4px;color:#858585;white-space:pre">10</div><div style="position:absolute;left:132px;top:324px;width:2px;height:36px;background:#404040"></div><div style="position:absolute;left:164px;top:324px;width:2px;height:36px;background:#404040"></div><div style="position:absolute;left:196px;top:324px;width:2px;height:36px;background:#404040"></div><div style="position:absolute;left:228px;top:327.3px;height:36px;line-height:36px;font-size:29px;letter-spacing:-1.4px;white-space:pre"><span style="color:#9cdcfe">&quot;amount&quot;</span><span style="color:#d4d4d4">:</span><span style="color:#d4d4d4"> </span><span style="color:#ce9178">&quot;27.00&quot;</span><span style="color:#d4d4d4">,</span></div><div style="position:absolute;left:0;width:78px;text-align:right;top:363.3px;height:36px;line-height:36px;font-size:29px;letter-spacing:-1.4px;color:#858585;white-space:pre">11</div><div style="position:absolute;left:132px;top:360px;width:2px;height:36px;background:#404040"></div><div style="position:absolute;left:164px;top:360px;width:2px;height:36px;background:#404040"></div><div style="position:absolute;left:196px;top:360px;width:2px;height:36px;background:#404040"></div><div style="position:absolute;left:228px;top:363.3px;height:36px;line-height:36px;font-size:29px;letter-spacing:-1.4px;white-space:pre"><span style="color:#9cdcfe">&quot;quantity&quot;</span><span style="color:#d4d4d4">:</span><span style="color:#d4d4d4"> </span><span style="color:#d4d4d4">3</span><span style="color:#d4d4d4">,</span></div><div style="position:absolute;left:0;width:78px;text-align:right;top:399.3px;height:36px;line-height:36px;font-size:29px;letter-spacing:-1.4px;color:#858585;white-space:pre">12</div><div style="position:absolute;left:132px;top:396px;width:2px;height:36px;background:#404040"></div><div style="position:absolute;left:164px;top:396px;width:2px;height:36px;background:#404040"></div><div style="position:absolute;left:196px;top:396px;width:2px;height:36px;background:#404040"></div><div style="position:absolute;left:228px;top:399.3px;height:36px;line-height:36px;font-size:29px;letter-spacing:-1.4px;white-space:pre"><span style="color:#9cdcfe">&quot;unitPrice&quot;</span><span style="color:#d4d4d4">:</span><span style="color:#d4d4d4"> </span><span style="color:#ce9178">&quot;9.00&quot;</span><span style="color:#d4d4d4">,</span></div><div style="position:absolute;left:0;width:78px;text-align:right;top:435.3px;height:36px;line-height:36px;font-size:29px;letter-spacing:-1.4px;color:#858585;white-space:pre">13</div><div style="position:absolute;left:132px;top:432px;width:2px;height:36px;background:#404040"></div><div style="position:absolute;left:164px;top:432px;width:2px;height:36px;background:#404040"></div><div style="position:absolute;left:196px;top:432px;width:2px;height:36px;background:#404040"></div><div style="position:absolute;left:228px;top:435.3px;height:36px;line-height:36px;font-size:29px;letter-spacing:-1.4px;white-space:pre"><span style="color:#9cdcfe">&quot;description&quot;</span><span style="color:#d4d4d4">:</span><span style="color:#d4d4d4"> </span><span style="color:#ce9178">&quot;ALLAGASH WHITE&quot;</span></div><div style="position:absolute;left:0;width:78px;text-align:right;top:471.3px;height:36px;line-height:36px;font-size:29px;letter-spacing:-1.4px;color:#858585;white-space:pre">14</div><div style="position:absolute;left:132px;top:468px;width:2px;height:36px;background:#404040"></div><div style="position:absolute;left:164px;top:468px;width:2px;height:36px;background:#404040"></div><div style="position:absolute;left:196px;top:471.3px;height:36px;line-height:36px;font-size:29px;letter-spacing:-1.4px;white-space:pre"><span style="color:#d4d4d4">}</span><span style="color:#d4d4d4">,</span></div><div style="position:absolute;left:0;width:78px;text-align:right;top:507.3px;height:36px;line-height:36px;font-size:29px;letter-spacing:-1.4px;color:#858585;white-space:pre">15</div><div style="position:absolute;left:132px;top:504px;width:2px;height:36px;background:#404040"></div><div style="position:absolute;left:164px;top:504px;width:2px;height:36px;background:#404040"></div><div style="position:absolute;left:196px;top:507.3px;height:36px;line-height:36px;font-size:29px;letter-spacing:-1.4px;white-space:pre"><span style="color:#d4d4d4">{</span></div><div style="position:absolute;left:0;width:78px;text-align:right;top:543.3px;height:36px;line-height:36px;font-size:29px;letter-spacing:-1.4px;color:#858585;white-space:pre">16</div><div style="position:absolute;left:132px;top:540px;width:2px;height:36px;background:#404040"></div><div style="position:absolute;left:164px;top:540px;width:2px;height:36px;background:#404040"></div><div style="position:absolute;left:196px;top:540px;width:2px;height:36px;background:#404040"></div><div style="position:absolute;left:228px;top:543.3px;height:36px;line-height:36px;font-size:29px;letter-spacing:-1.4px;white-space:pre"><span style="color:#9cdcfe">&quot;amount&quot;</span><span style="color:#d4d4d4">:</span><span style="color:#d4d4d4"> </span><span style="color:#ce9178">&quot;7.00&quot;</span><span style="color:#d4d4d4">,</span></div><div style="position:absolute;left:0;width:78px;text-align:right;top:579.3px;height:36px;line-height:36px;font-size:29px;letter-spacing:-1.4px;color:#858585;white-space:pre">17</div><div style="position:absolute;left:132px;top:576px;width:2px;height:36px;background:#404040"></div><div style="position:absolute;left:164px;top:576px;width:2px;height:36px;background:#404040"></div><div style="position:absolute;left:196px;top:576px;width:2px;height:36px;background:#404040"></div><div style="position:absolute;left:228px;top:579.3px;height:36px;line-height:36px;font-size:29px;letter-spacing:-1.4px;white-space:pre"><span style="color:#9cdcfe">&quot;description&quot;</span><span style="color:#d4d4d4">:</span><span style="color:#d4d4d4"> </span><span style="color:#ce9178">&quot;MODELO&quot;</span></div><div style="position:absolute;left:0;width:78px;text-align:right;top:615.3px;height:36px;line-height:36px;font-size:29px;letter-spacing:-1.4px;color:#858585;white-space:pre">18</div><div style="position:absolute;left:132px;top:612px;width:2px;height:36px;background:#404040"></div><div style="position:absolute;left:164px;top:612px;width:2px;height:36px;background:#404040"></div><div style="position:absolute;left:196px;top:615.3px;height:36px;line-height:36px;font-size:29px;letter-spacing:-1.4px;white-space:pre"><span style="color:#d4d4d4">}</span><span style="color:#d4d4d4">,</span></div><div style="position:absolute;left:0;width:78px;text-align:right;top:651.3px;height:36px;line-height:36px;font-size:29px;letter-spacing:-1.4px;color:#858585;white-space:pre">19</div><div style="position:absolute;left:132px;top:648px;width:2px;height:36px;background:#404040"></div><div style="position:absolute;left:164px;top:648px;width:2px;height:36px;background:#404040"></div><div style="position:absolute;left:196px;top:651.3px;height:36px;line-height:36px;font-size:29px;letter-spacing:-1.4px;white-space:pre"><span style="color:#d4d4d4">{</span></div><div style="position:absolute;left:0;width:78px;text-align:right;top:687.3px;height:36px;line-height:36px;font-size:29px;letter-spacing:-1.4px;color:#858585;white-space:pre">20</div><div style="position:absolute;left:132px;top:684px;width:2px;height:36px;background:#404040"></div><div style="position:absolute;left:164px;top:684px;width:2px;height:36px;background:#404040"></div><div style="position:absolute;left:196px;top:684px;width:2px;height:36px;background:#404040"></div><div style="position:absolute;left:228px;top:687.3px;height:36px;line-height:36px;font-size:29px;letter-spacing:-1.4px;white-space:pre"><span style="color:#9cdcfe">&quot;amount&quot;</span><span style="color:#d4d4d4">:</span><span style="color:#d4d4d4"> </span><span style="color:#ce9178">&quot;7.00&quot;</span><span style="color:#d4d4d4">,</span></div><div style="position:absolute;left:0;width:78px;text-align:right;top:723.3px;height:36px;line-height:36px;font-size:29px;letter-spacing:-1.4px;color:#858585;white-space:pre">21</div><div style="position:absolute;left:132px;top:720px;width:2px;height:36px;background:#404040"></div><div style="position:absolute;left:164px;top:720px;width:2px;height:36px;background:#404040"></div><div style="position:absolute;left:196px;top:720px;width:2px;height:36px;background:#404040"></div><div style="position:absolute;left:228px;top:723.3px;height:36px;line-height:36px;font-size:29px;letter-spacing:-1.4px;white-space:pre"><span style="color:#9cdcfe">&quot;description&quot;</span><span style="color:#d4d4d4">:</span><span style="color:#d4d4d4"> </span><span style="color:#ce9178">&quot;EDDIE BABASA&quot;</span></div><div style="position:absolute;left:0;width:78px;text-align:right;top:759.3px;height:36px;line-height:36px;font-size:29px;letter-spacing:-1.4px;color:#858585;white-space:pre">22</div><div style="position:absolute;left:132px;top:756px;width:2px;height:36px;background:#404040"></div><div style="position:absolute;left:164px;top:756px;width:2px;height:36px;background:#404040"></div><div style="position:absolute;left:196px;top:759.3px;height:36px;line-height:36px;font-size:29px;letter-spacing:-1.4px;white-space:pre"><span style="color:#d4d4d4">}</span><span style="color:#d4d4d4">,</span></div><div style="position:absolute;left:0;width:78px;text-align:right;top:795.3px;height:36px;line-height:36px;font-size:29px;letter-spacing:-1.4px;color:#858585;white-space:pre">23</div><div style="position:absolute;left:132px;top:792px;width:2px;height:36px;background:#404040"></div><div style="position:absolute;left:164px;top:792px;width:2px;height:36px;background:#404040"></div><div style="position:absolute;left:196px;top:795.3px;height:36px;line-height:36px;font-size:29px;letter-spacing:-1.4px;white-space:pre"><span style="color:#d4d4d4">{</span></div><div style="position:absolute;left:0;width:78px;text-align:right;top:831.3px;height:36px;line-height:36px;font-size:29px;letter-spacing:-1.4px;color:#858585;white-space:pre">24</div><div style="position:absolute;left:132px;top:828px;width:2px;height:36px;background:#404040"></div><div style="position:absolute;left:164px;top:828px;width:2px;height:36px;background:#404040"></div><div style="position:absolute;left:196px;top:828px;width:2px;height:36px;background:#404040"></div><div style="position:absolute;left:228px;top:831.3px;height:36px;line-height:36px;font-size:29px;letter-spacing:-1.4px;white-space:pre"><span style="color:#9cdcfe">&quot;amount&quot;</span><span style="color:#d4d4d4">:</span><span style="color:#d4d4d4"> </span><span style="color:#ce9178">&quot;19.00&quot;</span><span style="color:#d4d4d4">,</span></div><div style="position:absolute;left:0;width:78px;text-align:right;top:867.3px;height:36px;line-height:36px;font-size:29px;letter-spacing:-1.4px;color:#858585;white-space:pre">25</div><div style="position:absolute;left:132px;top:864px;width:2px;height:36px;background:#404040"></div><div style="position:absolute;left:164px;top:864px;width:2px;height:36px;background:#404040"></div><div style="position:absolute;left:196px;top:864px;width:2px;height:36px;background:#404040"></div><div style="position:absolute;left:228px;top:867.3px;height:36px;line-height:36px;font-size:29px;letter-spacing:-1.4px;white-space:pre"><span style="color:#9cdcfe">&quot;description&quot;</span><span style="color:#d4d4d4">:</span><span style="color:#d4d4d4"> </span><span style="color:#ce9178">&quot;CHEESEBURGER&quot;</span></div><div style="position:absolute;left:0;width:78px;text-align:right;top:903.3px;height:36px;line-height:36px;font-size:29px;letter-spacing:-1.4px;color:#858585;white-space:pre">26</div><div style="position:absolute;left:132px;top:900px;width:2px;height:36px;background:#404040"></div><div style="position:absolute;left:164px;top:900px;width:2px;height:36px;background:#404040"></div><div style="position:absolute;left:196px;top:903.3px;height:36px;line-height:36px;font-size:29px;letter-spacing:-1.4px;white-space:pre"><span style="color:#d4d4d4">}</span><span style="color:#d4d4d4">,</span></div><div style="position:absolute;left:0;width:78px;text-align:right;top:939.3px;height:36px;line-height:36px;font-size:29px;letter-spacing:-1.4px;color:#858585;white-space:pre">27</div><div style="position:absolute;left:132px;top:936px;width:2px;height:36px;background:#404040"></div><div style="position:absolute;left:164px;top:936px;width:2px;height:36px;background:#404040"></div><div style="position:absolute;left:196px;top:939.3px;height:36px;line-height:36px;font-size:29px;letter-spacing:-1.4px;white-space:pre"><span style="color:#d4d4d4">{</span></div><div style="position:absolute;left:0;width:78px;text-align:right;top:975.3px;height:36px;line-height:36px;font-size:29px;letter-spacing:-1.4px;color:#858585;white-space:pre">28</div><div style="position:absolute;left:132px;top:972px;width:2px;height:36px;background:#404040"></div><div style="position:absolute;left:164px;top:972px;width:2px;height:36px;background:#404040"></div><div style="position:absolute;left:196px;top:972px;width:2px;height:36px;background:#404040"></div><div style="position:absolute;left:228px;top:975.3px;height:36px;line-height:36px;font-size:29px;letter-spacing:-1.4px;white-space:pre"><span style="color:#9cdcfe">&quot;amount&quot;</span><span style="color:#d4d4d4">:</span><span style="color:#d4d4d4"> </span><span style="color:#ce9178">&quot;3.50&quot;</span><span style="color:#d4d4d4">,</span></div><div style="position:absolute;left:0;width:78px;text-align:right;top:1011.3px;height:36px;line-height:36px;font-size:29px;letter-spacing:-1.4px;color:#858585;white-space:pre">29</div><div style="position:absolute;left:132px;top:1008px;width:2px;height:36px;background:#404040"></div><div style="position:absolute;left:164px;top:1008px;width:2px;height:36px;background:#404040"></div><div style="position:absolute;left:196px;top:1008px;width:2px;height:36px;background:#404040"></div><div style="position:absolute;left:228px;top:1011.3px;height:36px;line-height:36px;font-size:29px;letter-spacing:-1.4px;white-space:pre"><span style="color:#9cdcfe">&quot;description&quot;</span><span style="color:#d4d4d4">:</span><span style="color:#d4d4d4"> </span><span style="color:#ce9178">&quot;SOURDOUGH BREAD&quot;</span></div><div style="position:absolute;left:0;width:78px;text-align:right;top:1047.3px;height:36px;line-height:36px;font-size:29px;letter-spacing:-1.4px;color:#858585;white-space:pre">30</div><div style="position:absolute;left:132px;top:1044px;width:2px;height:36px;background:#404040"></div><div style="position:absolute;left:164px;top:1044px;width:2px;height:36px;background:#404040"></div><div style="position:absolute;left:196px;top:1047.3px;height:36px;line-height:36px;font-size:29px;letter-spacing:-1.4px;white-space:pre"><span style="color:#d4d4d4">}</span><span style="color:#d4d4d4">,</span></div><div style="position:absolute;left:0;width:78px;text-align:right;top:1083.3px;height:36px;line-height:36px;font-size:29px;letter-spacing:-1.4px;color:#858585;white-space:pre">31</div><div style="position:absolute;left:132px;top:1080px;width:2px;height:36px;background:#404040"></div><div style="position:absolute;left:164px;top:1080px;width:2px;height:36px;background:#404040"></div><div style="position:absolute;left:196px;top:1083.3px;height:36px;line-height:36px;font-size:29px;letter-spacing:-1.4px;white-space:pre"><span style="color:#d4d4d4">{</span></div><div style="position:absolute;left:0;width:78px;text-align:right;top:1119.3px;height:36px;line-height:36px;font-size:29px;letter-spacing:-1.4px;color:#858585;white-space:pre">32</div><div style="position:absolute;left:132px;top:1116px;width:2px;height:36px;background:#404040"></div><div style="position:absolute;left:164px;top:1116px;width:2px;height:36px;background:#404040"></div><div style="position:absolute;left:196px;top:1116px;width:2px;height:36px;background:#404040"></div><div style="position:absolute;left:228px;top:1119.3px;height:36px;line-height:36px;font-size:29px;letter-spacing:-1.4px;white-space:pre"><span style="color:#9cdcfe">&quot;amount&quot;</span><span style="color:#d4d4d4">:</span><span style="color:#d4d4d4"> </span><span style="color:#ce9178">&quot;23.00&quot;</span><span style="color:#d4d4d4">,</span></div><div style="position:absolute;left:0;width:78px;text-align:right;top:1155.3px;height:36px;line-height:36px;font-size:29px;letter-spacing:-1.4px;color:#858585;white-space:pre">33</div><div style="position:absolute;left:132px;top:1152px;width:2px;height:36px;background:#404040"></div><div style="position:absolute;left:164px;top:1152px;width:2px;height:36px;background:#404040"></div><div style="position:absolute;left:196px;top:1152px;width:2px;height:36px;background:#404040"></div><div style="position:absolute;left:228px;top:1155.3px;height:36px;line-height:36px;font-size:29px;letter-spacing:-1.4px;white-space:pre"><span style="color:#9cdcfe">&quot;description&quot;</span><span style="color:#d4d4d4">:</span><span style="color:#d4d4d4"> </span><span style="color:#ce9178">&quot;CHEESE QUESADILLA&quot;</span></div><div style="position:absolute;left:0;width:78px;text-align:right;top:1191.3px;height:36px;line-height:36px;font-size:29px;letter-spacing:-1.4px;color:#858585;white-space:pre">34</div><div style="position:absolute;left:132px;top:1188px;width:2px;height:36px;background:#404040"></div><div style="position:absolute;left:164px;top:1188px;width:2px;height:36px;background:#404040"></div><div style="position:absolute;left:196px;top:1191.3px;height:36px;line-height:36px;font-size:29px;letter-spacing:-1.4px;white-space:pre"><span style="color:#d4d4d4">}</span><span style="color:#d4d4d4">,</span></div><div style="position:absolute;left:0;width:78px;text-align:right;top:1227.3px;height:36px;line-height:36px;font-size:29px;letter-spacing:-1.4px;color:#858585;white-space:pre">35</div><div style="position:absolute;left:132px;top:1224px;width:2px;height:36px;background:#404040"></div><div style="position:absolute;left:164px;top:1224px;width:2px;height:36px;background:#404040"></div><div style="position:absolute;left:196px;top:1227.3px;height:36px;line-height:36px;font-size:29px;letter-spacing:-1.4px;white-space:pre"><span style="color:#d4d4d4">{</span></div><div style="position:absolute;left:0;width:78px;text-align:right;top:1263.3px;height:36px;line-height:36px;font-size:29px;letter-spacing:-1.4px;color:#858585;white-space:pre">36</div><div style="position:absolute;left:132px;top:1260px;width:2px;height:36px;background:#404040"></div><div style="position:absolute;left:164px;top:1260px;width:2px;height:36px;background:#404040"></div><div style="position:absolute;left:196px;top:1260px;width:2px;height:36px;background:#404040"></div><div style="position:absolute;left:228px;top:1263.3px;height:36px;line-height:36px;font-size:29px;letter-spacing:-1.4px;white-space:pre"><span style="color:#9cdcfe">&quot;amount&quot;</span><span style="color:#d4d4d4">:</span><span style="color:#d4d4d4"> </span><span style="color:#ce9178">&quot;28.00&quot;</span><span style="color:#d4d4d4">,</span></div><div style="position:absolute;left:0;width:78px;text-align:right;top:1299.3px;height:36px;line-height:36px;font-size:29px;letter-spacing:-1.4px;color:#858585;white-space:pre">37</div><div style="position:absolute;left:132px;top:1296px;width:2px;height:36px;background:#404040"></div><div style="position:absolute;left:164px;top:1296px;width:2px;height:36px;background:#404040"></div><div style="position:absolute;left:196px;top:1296px;width:2px;height:36px;background:#404040"></div><div style="position:absolute;left:228px;top:1299.3px;height:36px;line-height:36px;font-size:29px;letter-spacing:-1.4px;white-space:pre"><span style="color:#9cdcfe">&quot;description&quot;</span><span style="color:#d4d4d4">:</span><span style="color:#d4d4d4"> </span><span style="color:#ce9178">&quot;FISH &amp; CHIPS&quot;</span></div><div style="position:absolute;left:0;width:78px;text-align:right;top:1335.3px;height:36px;line-height:36px;font-size:29px;letter-spacing:-1.4px;color:#858585;white-space:pre">38</div><div style="position:absolute;left:132px;top:1332px;width:2px;height:36px;background:#404040"></div><div style="position:absolute;left:164px;top:1332px;width:2px;height:36px;background:#404040"></div><div style="position:absolute;left:196px;top:1335.3px;height:36px;line-height:36px;font-size:29px;letter-spacing:-1.4px;white-space:pre"><span style="color:#d4d4d4">}</span><span style="color:#d4d4d4">,</span></div><div style="position:absolute;left:0;width:78px;text-align:right;top:1371.3px;height:36px;line-height:36px;font-size:29px;letter-spacing:-1.4px;color:#858585;white-space:pre">39</div><div style="position:absolute;left:132px;top:1368px;width:2px;height:36px;background:#404040"></div><div style="position:absolute;left:164px;top:1368px;width:2px;height:36px;background:#404040"></div><div style="position:absolute;left:196px;top:1371.3px;height:36px;line-height:36px;font-size:29px;letter-spacing:-1.4px;white-space:pre"><span style="color:#d4d4d4">{</span></div><div style="position:absolute;left:0;width:78px;text-align:right;top:1407.3px;height:36px;line-height:36px;font-size:29px;letter-spacing:-1.4px;color:#858585;white-space:pre">40</div><div style="position:absolute;left:132px;top:1404px;width:2px;height:36px;background:#404040"></div><div style="position:absolute;left:164px;top:1404px;width:2px;height:36px;background:#404040"></div><div style="position:absolute;left:196px;top:1404px;width:2px;height:36px;background:#404040"></div><div style="position:absolute;left:228px;top:1407.3px;height:36px;line-height:36px;font-size:29px;letter-spacing:-1.4px;white-space:pre"><span style="color:#9cdcfe">&quot;amount&quot;</span><span style="color:#d4d4d4">:</span><span style="color:#d4d4d4"> </span><span style="color:#ce9178">&quot;6.00&quot;</span><span style="color:#d4d4d4">,</span></div><div style="position:absolute;left:0;width:78px;text-align:right;top:1443.3px;height:36px;line-height:36px;font-size:29px;letter-spacing:-1.4px;color:#858585;white-space:pre">41</div><div style="position:absolute;left:132px;top:1440px;width:2px;height:36px;background:#404040"></div><div style="position:absolute;left:164px;top:1440px;width:2px;height:36px;background:#404040"></div><div style="position:absolute;left:196px;top:1440px;width:2px;height:36px;background:#404040"></div><div style="position:absolute;left:228px;top:1443.3px;height:36px;line-height:36px;font-size:29px;letter-spacing:-1.4px;white-space:pre"><span style="color:#9cdcfe">&quot;description&quot;</span><span style="color:#d4d4d4">:</span><span style="color:#d4d4d4"> </span><span style="color:#ce9178">&quot;SODA&quot;</span></div><div style="position:absolute;left:0;width:78px;text-align:right;top:1479.3px;height:36px;line-height:36px;font-size:29px;letter-spacing:-1.4px;color:#858585;white-space:pre">42</div><div style="position:absolute;left:132px;top:1476px;width:2px;height:36px;background:#404040"></div><div style="position:absolute;left:164px;top:1476px;width:2px;height:36px;background:#404040"></div><div style="position:absolute;left:196px;top:1479.3px;height:36px;line-height:36px;font-size:29px;letter-spacing:-1.4px;white-space:pre"><span style="color:#d4d4d4">}</span><span style="color:#d4d4d4">,</span></div></div><div style="position:absolute;left:2889px;top:1828px;width:96px;height:96px;background:#6e56cf;border-radius:50%"></div><svg style="position:absolute;left:2914px;top:1850px" width="46" height="52" viewBox="0 0 46 52"><path d="M5 2 H40 Q44 2 44 6 V49 L34 45 H5 Q2 45 2 42 V6 Q2 2 5 2 Z" fill="#fff"/><path d="M9 32.3 Q23 45 37 32.3" fill="none" stroke="#6e56cf" stroke-width="2.8" stroke-linecap="round"/></svg><div style="position:absolute;left:0px;top:1961px;width:3026px;height:2px;background:#48484d"></div>
</body></html>
